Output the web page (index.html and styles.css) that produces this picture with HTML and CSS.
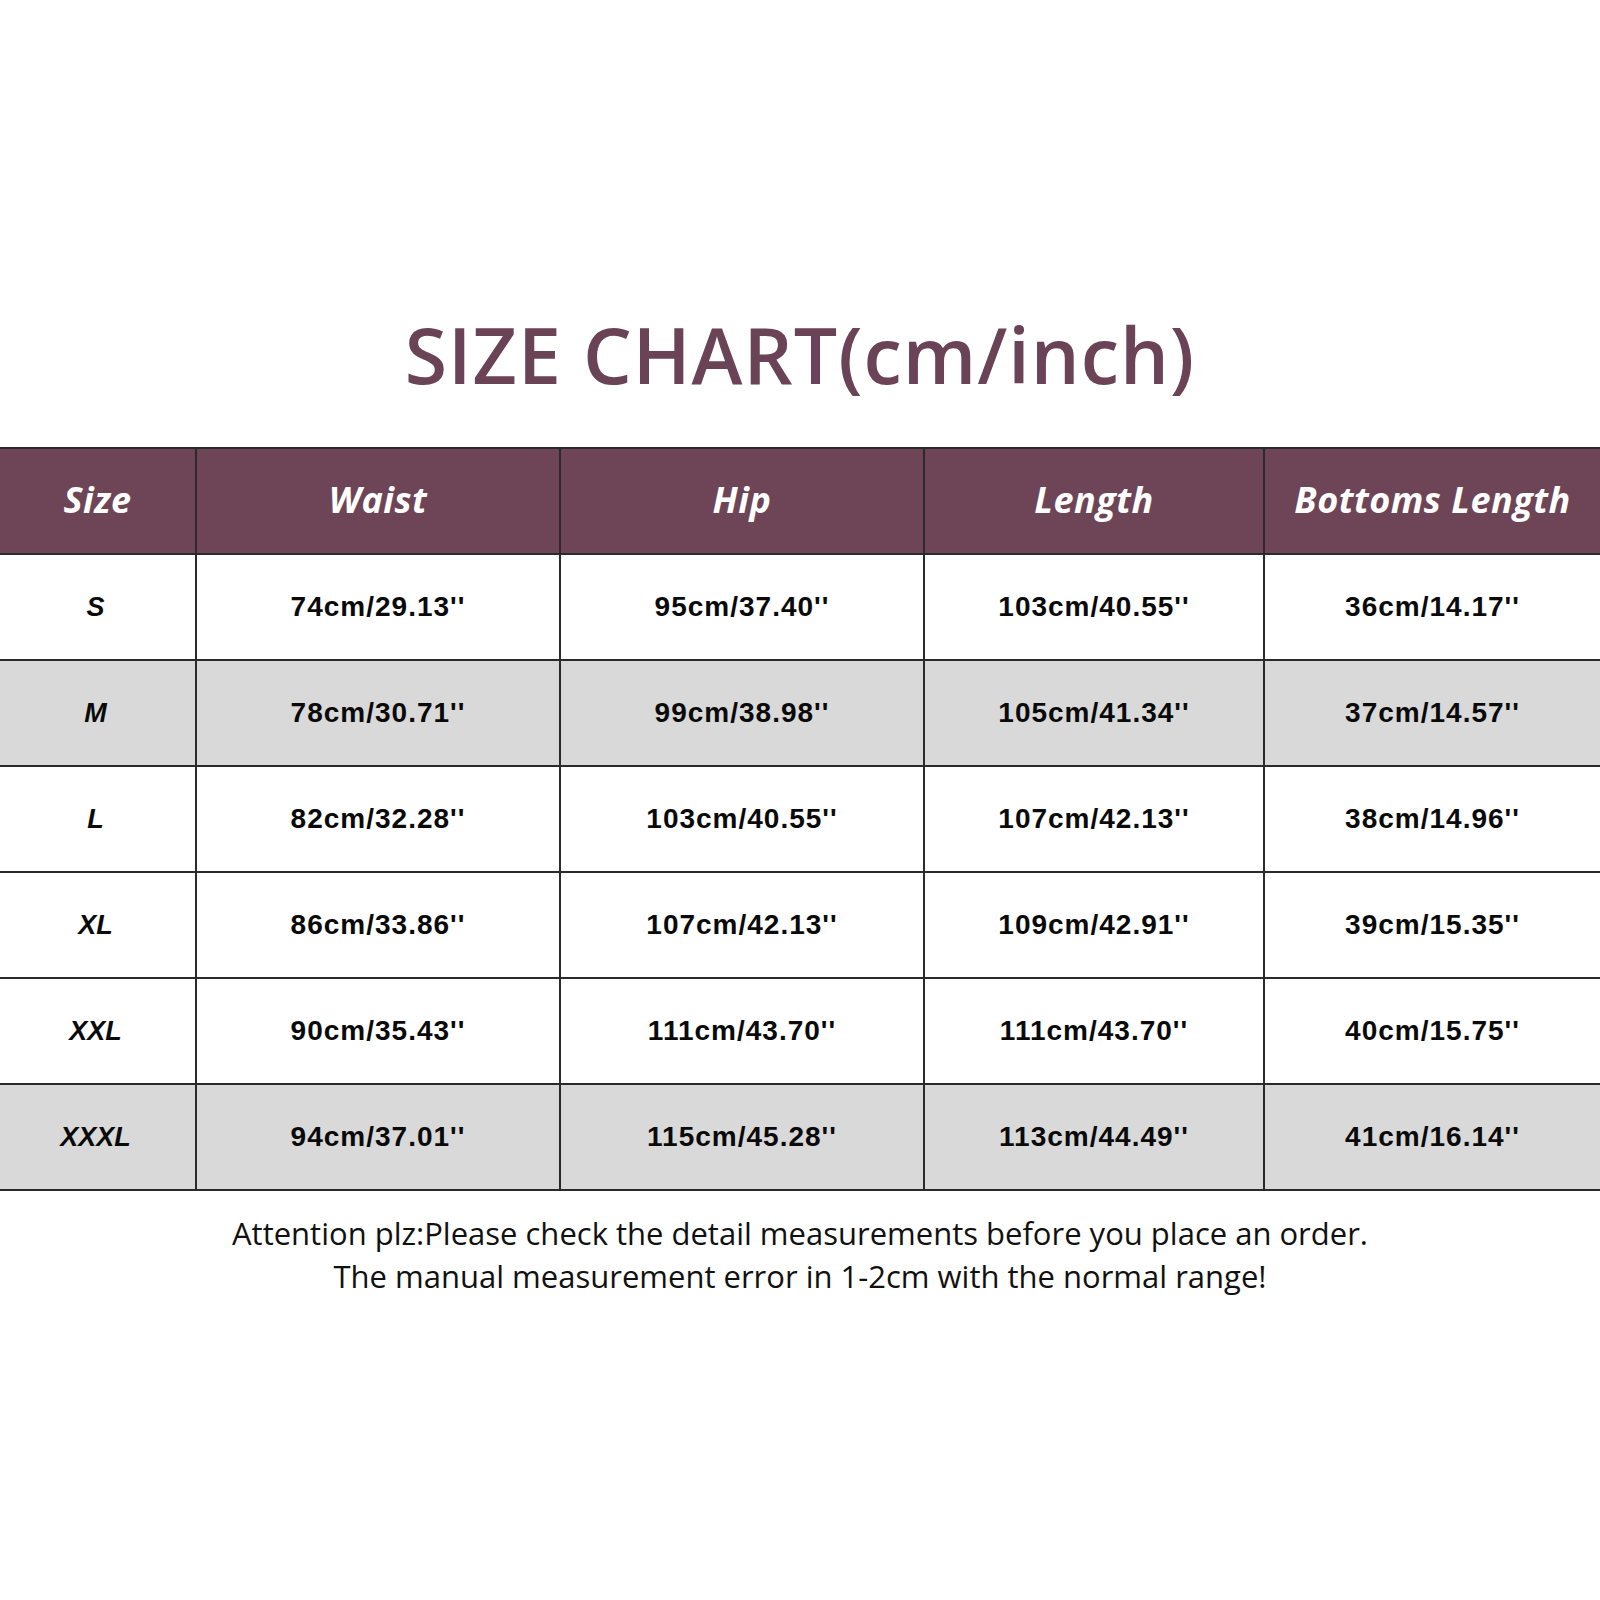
FILE: index.html
```html
<!DOCTYPE html>
<html>
<head>
<meta charset="utf-8">
<link rel="stylesheet" href="styles.css">
</head>
<body>
<div class="page">
  <h1 class="title">SIZE CHART(cm/inch)</h1>
  <div class="chart">
    <div class="row head">
      <div class="cell">Size</div>
      <div class="cell">Waist</div>
      <div class="cell">Hip</div>
      <div class="cell">Length</div>
      <div class="cell">Bottoms Length</div>
    </div>
    <div class="row">
      <div class="cell size">S</div>
      <div class="cell">74cm/29.13''</div>
      <div class="cell">95cm/37.40''</div>
      <div class="cell">103cm/40.55''</div>
      <div class="cell">36cm/14.17''</div>
    </div>
    <div class="row gray">
      <div class="cell size">M</div>
      <div class="cell">78cm/30.71''</div>
      <div class="cell">99cm/38.98''</div>
      <div class="cell">105cm/41.34''</div>
      <div class="cell">37cm/14.57''</div>
    </div>
    <div class="row">
      <div class="cell size">L</div>
      <div class="cell">82cm/32.28''</div>
      <div class="cell">103cm/40.55''</div>
      <div class="cell">107cm/42.13''</div>
      <div class="cell">38cm/14.96''</div>
    </div>
    <div class="row">
      <div class="cell size">XL</div>
      <div class="cell">86cm/33.86''</div>
      <div class="cell">107cm/42.13''</div>
      <div class="cell">109cm/42.91''</div>
      <div class="cell">39cm/15.35''</div>
    </div>
    <div class="row">
      <div class="cell size">XXL</div>
      <div class="cell">90cm/35.43''</div>
      <div class="cell">111cm/43.70''</div>
      <div class="cell">111cm/43.70''</div>
      <div class="cell">40cm/15.75''</div>
    </div>
    <div class="row gray">
      <div class="cell size">XXXL</div>
      <div class="cell">94cm/37.01''</div>
      <div class="cell">115cm/45.28''</div>
      <div class="cell">113cm/44.49''</div>
      <div class="cell">41cm/16.14''</div>
    </div>
  </div>
  <div class="note">
    <p>Attention plz:Please check the detail measurements before you place an order.</p>
    <p>The manual measurement error in 1-2cm with the normal range!</p>
  </div>
</div>
</body>
</html>
```
FILE: styles.css
```css
html, body {
  margin: 0;
  padding: 0;
  background: #ffffff;
}
.page {
  width: 1600px;
  height: 1600px;
  overflow: hidden;
}
.title {
  margin: 316px 0 0 0;
  height: 78px;
  line-height: 78px;
  font-family: "Open Sans", sans-serif;
  font-weight: 600;
  font-size: 77px;
  letter-spacing: 1px;
  color: #6b4356;
  text-align: center;
}
.chart {
  margin-top: 53px;
  border-top: 2px solid #2a2a2a;
}
.row {
  display: grid;
  grid-template-columns: 195px 364px 364px 340px 337px;
  height: 106px;
  box-sizing: border-box;
  border-bottom: 2px solid #2a2a2a;
  background: #ffffff;
}
.row.gray {
  background: #d9d9d9;
}
.row.head {
  background: #6e4556;
}
.cell {
  display: flex;
  align-items: center;
  justify-content: center;
  border-left: 2px solid #2a2a2a;
  font-family: "Liberation Sans", Arial, sans-serif;
  font-weight: bold;
  font-size: 28px;
  letter-spacing: 1px;
  color: #0a0a0a;
}
.cell:first-child {
  border-left: none;
}
.row.head .cell {
  font-family: "Open Sans", sans-serif;
  font-style: italic;
  font-weight: 700;
  font-size: 36px;
  letter-spacing: 0.5px;
  color: #ffffff;
  padding-bottom: 4px;
}
.cell.size {
  font-style: italic;
  font-size: 27px;
  letter-spacing: 0;
  padding-right: 4px;
}
.note {
  margin-top: 21px;
  font-family: "Open Sans", sans-serif;
  font-size: 31px;
  line-height: 43px;
  color: #111111;
  text-align: center;
}
.note p {
  margin: 0;
}
```
